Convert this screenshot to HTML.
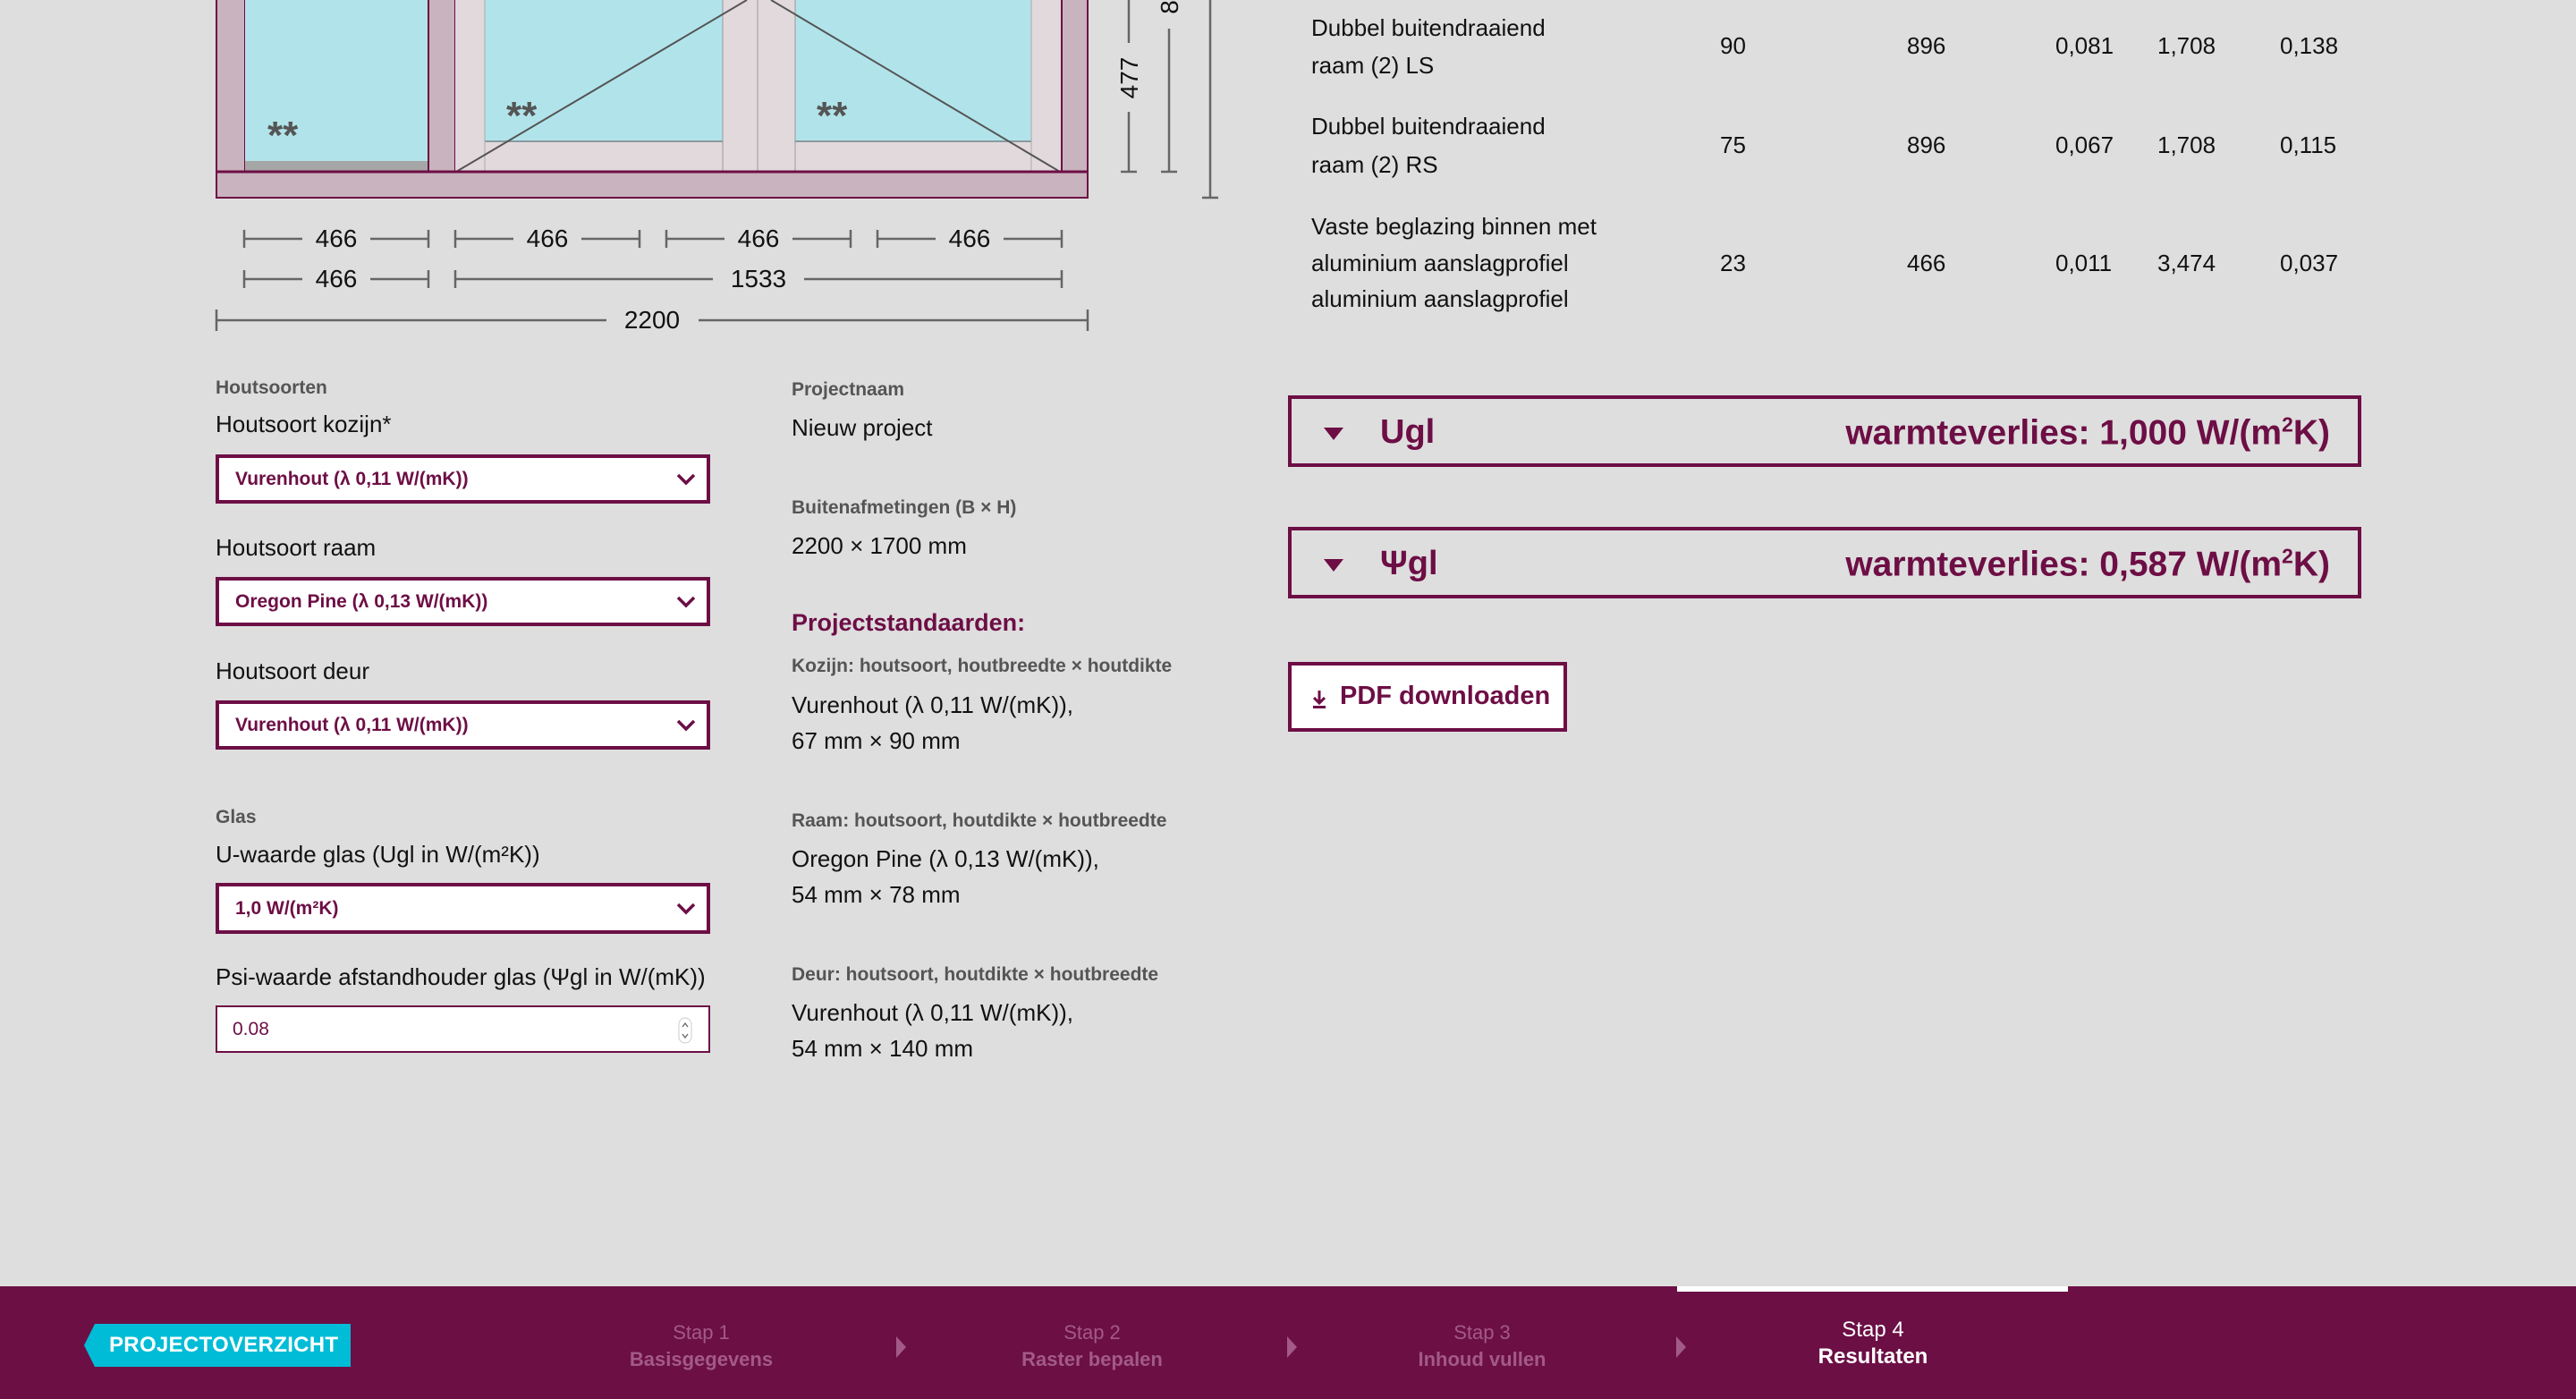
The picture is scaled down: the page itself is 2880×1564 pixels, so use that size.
<!DOCTYPE html>
<html><head><meta charset="utf-8"><style>
*{margin:0;padding:0;box-sizing:border-box}
body{width:2880px;height:1564px;background:#dedede;font-family:"Liberation Sans",Arial,sans-serif;color:#111;position:relative;overflow:hidden}
.a{position:absolute;white-space:nowrap}
.t{font-size:26px;line-height:30px;transform:translateY(-15px)}
.lbl{font-size:21px;font-weight:bold;color:#555;transform:translateY(-12px)}
.sel{position:absolute;left:241px;width:553px;background:#fff;border:4px solid #6d0e45}
.sel span{position:absolute;left:18px;top:50%;transform:translateY(-50%);font-size:21px;font-weight:bold;color:#6d0e45}
.sel svg{position:absolute;right:12px;top:50%;transform:translateY(-50%)}
.acc{position:absolute;left:1440px;width:1200px;height:80px;border:4px solid #6d0e45}
.acc .tri{position:absolute;left:36px;top:32px;width:0;height:0;border-left:11px solid transparent;border-right:11px solid transparent;border-top:14px solid #6d0e45}
.acc .h{position:absolute;left:99px;top:50%;transform:translateY(-46%);font-size:38px;font-weight:bold;color:#6d0e45}
.acc .r{position:absolute;right:31px;top:50%;transform:translateY(-46%);font-size:39px;font-weight:bold;color:#6d0e45}
.num{font-size:26px;transform:translateY(-15px)}
.step{position:absolute;text-align:center;width:300px;font-size:22px;line-height:30px;color:#a25a86}
.step b{display:block}
</style></head><body>

<svg class="a" style="left:0;top:0" width="1400" height="380" viewBox="0 0 1400 380">
 <rect x="242" y="-2" width="32" height="194" fill="#c9b3be" stroke="#6d0e45" stroke-width="2"/>
 <rect x="274" y="-2" width="205" height="182" fill="#b1e4ea"/>
 <rect x="274" y="180" width="205" height="12" fill="#a6a6a6"/>
 <rect x="479" y="-2" width="30" height="194" fill="#c9b3be" stroke="#6d0e45" stroke-width="2"/>
 <rect x="509" y="-2" width="678" height="194" fill="#e2d9dd"/>
 <rect x="542" y="-2" width="266" height="160" fill="#b1e4ea"/>
 <rect x="889" y="-2" width="264" height="160" fill="#b1e4ea"/>
 <line x1="542" y1="158" x2="808" y2="158" stroke="#8a9a9e" stroke-width="2"/>
 <line x1="889" y1="158" x2="1153" y2="158" stroke="#8a9a9e" stroke-width="2"/>
 <line x1="542" y1="0" x2="542" y2="192" stroke="#aaa" stroke-width="1"/>
 <line x1="808" y1="0" x2="808" y2="192" stroke="#999" stroke-width="1"/>
 <line x1="847" y1="0" x2="847" y2="192" stroke="#999" stroke-width="1"/>
 <line x1="889" y1="0" x2="889" y2="192" stroke="#999" stroke-width="1"/>
 <line x1="1153" y1="0" x2="1153" y2="192" stroke="#aaa" stroke-width="1"/>
 <rect x="1187" y="-2" width="29" height="194" fill="#c9b3be" stroke="#6d0e45" stroke-width="2"/>
 <line x1="510" y1="192" x2="835" y2="0" stroke="#555" stroke-width="2"/>
 <line x1="862" y1="0" x2="1185" y2="192" stroke="#555" stroke-width="2"/>
 <rect x="242" y="192" width="974" height="29" fill="#c9b3be" stroke="#6d0e45" stroke-width="2"/>
 <line x1="242" y1="192" x2="1216" y2="192" stroke="#6d0e45" stroke-width="3"/>
 <g font-family="Liberation Sans, sans-serif" font-size="44" font-weight="bold" fill="#555">
  <text x="299" y="166">**</text><text x="566" y="144">**</text><text x="913" y="144">**</text>
 </g>
 <g stroke="#666" stroke-width="2.5">
  <line x1="1262" y1="0" x2="1262" y2="48"/><line x1="1262" y1="125" x2="1262" y2="192"/><line x1="1253" y1="192" x2="1271" y2="192"/>
  <line x1="1307" y1="32" x2="1307" y2="192"/><line x1="1298" y1="192" x2="1316" y2="192"/>
  <line x1="1353" y1="0" x2="1353" y2="221"/><line x1="1344" y1="221" x2="1362" y2="221"/>
 </g>
 <g font-family="Liberation Sans, sans-serif" font-size="28" fill="#111">
  <text transform="translate(1272,87) rotate(-90)" text-anchor="middle">477</text>
  <text transform="translate(1317,8) rotate(-90)" text-anchor="middle">8</text>
 </g>
 <g stroke="#666" stroke-width="2.5" fill="none">
  <path d="M273 257v20M273 267h65M414 267h65M479 257v20"/>
  <path d="M509 257v20M509 267h65M650 267h65M715 257v20"/>
  <path d="M745 257v20M745 267h65M886 267h65M951 257v20"/>
  <path d="M981 257v20M981 267h65M1122 267h65M1187 257v20"/>
  <path d="M273 302v20M273 312h65M414 312h65M479 302v20"/>
  <path d="M509 302v20M509 312h288M899 312h288M1187 302v20"/>
  <path d="M242 346v24M242 358h436M781 358h435M1216 346v24"/>
 </g>
 <g font-family="Liberation Sans, sans-serif" font-size="28" fill="#111" text-anchor="middle">
  <text x="376" y="276">466</text><text x="612" y="276">466</text><text x="848" y="276">466</text><text x="1084" y="276">466</text>
  <text x="376" y="321">466</text><text x="848" y="321">1533</text>
  <text x="729" y="367">2200</text>
 </g>
</svg>

<div class="a t" style="left:1466px;top:31px">Dubbel buitendraaiend</div>
<div class="a t" style="left:1466px;top:73px">raam (2) LS</div>
<div class="a num" style="left:1923px;top:51px">90</div><div class="a num" style="left:2132px;top:51px">896</div><div class="a num" style="left:2298px;top:51px">0,081</div><div class="a num" style="left:2412px;top:51px">1,708</div><div class="a num" style="left:2549px;top:51px">0,138</div>
<div class="a t" style="left:1466px;top:141px">Dubbel buitendraaiend</div>
<div class="a t" style="left:1466px;top:184px">raam (2) RS</div>
<div class="a num" style="left:1923px;top:162px">75</div><div class="a num" style="left:2132px;top:162px">896</div><div class="a num" style="left:2298px;top:162px">0,067</div><div class="a num" style="left:2412px;top:162px">1,708</div><div class="a num" style="left:2549px;top:162px">0,115</div>
<div class="a t" style="left:1466px;top:253px">Vaste beglazing binnen met</div>
<div class="a t" style="left:1466px;top:294px">aluminium aanslagprofiel</div>
<div class="a t" style="left:1466px;top:334px">aluminium aanslagprofiel</div>
<div class="a num" style="left:1923px;top:294px">23</div><div class="a num" style="left:2132px;top:294px">466</div><div class="a num" style="left:2298px;top:294px">0,011</div><div class="a num" style="left:2412px;top:294px">3,474</div><div class="a num" style="left:2549px;top:294px">0,037</div>

<div class="a lbl" style="left:241px;top:434px">Houtsoorten</div>
<div class="a t" style="left:241px;top:474px">Houtsoort kozijn*</div>
<div class="sel" style="top:508px;height:55px"><span>Vurenhout (λ 0,11 W/(mK))</span><svg width="22" height="14" viewBox="0 0 22 14"><path d="M2 2l9 9 9-9" stroke="#6d0e45" stroke-width="3.5" fill="none"/></svg></div>
<div class="a t" style="left:241px;top:612px">Houtsoort raam</div>
<div class="sel" style="top:645px;height:55px"><span>Oregon Pine (λ 0,13 W/(mK))</span><svg width="22" height="14" viewBox="0 0 22 14"><path d="M2 2l9 9 9-9" stroke="#6d0e45" stroke-width="3.5" fill="none"/></svg></div>
<div class="a t" style="left:241px;top:750px">Houtsoort deur</div>
<div class="sel" style="top:783px;height:55px"><span>Vurenhout (λ 0,11 W/(mK))</span><svg width="22" height="14" viewBox="0 0 22 14"><path d="M2 2l9 9 9-9" stroke="#6d0e45" stroke-width="3.5" fill="none"/></svg></div>
<div class="a lbl" style="left:241px;top:914px">Glas</div>
<div class="a t" style="left:241px;top:955px">U-waarde glas (Ugl in W/(m²K))</div>
<div class="sel" style="top:987px;height:57px"><span>1,0 W/(m²K)</span><svg width="22" height="14" viewBox="0 0 22 14"><path d="M2 2l9 9 9-9" stroke="#6d0e45" stroke-width="3.5" fill="none"/></svg></div>
<div class="a t" style="left:241px;top:1092px">Psi-waarde afstandhouder glas (Ψgl in W/(mK))</div>
<div class="a" style="left:241px;top:1124px;width:553px;height:53px;background:#fff;border:2px solid #6d0e45">
 <span style="position:absolute;left:17px;top:13px;font-size:21px;color:#6d0e45">0.08</span>
 <svg style="position:absolute;right:18px;top:11px" width="16" height="30" viewBox="0 0 16 30"><rect x="1" y="1" width="14" height="28" rx="7" fill="#fff" stroke="#ccc"/><path d="M5 11l3-4 3 4M5 19l3 4 3-4" stroke="#666" stroke-width="1.3" fill="none"/></svg>
</div>

<div class="a lbl" style="left:885px;top:436px">Projectnaam</div>
<div class="a t" style="left:885px;top:478px">Nieuw project</div>
<div class="a lbl" style="left:885px;top:568px">Buitenafmetingen (B × H)</div>
<div class="a t" style="left:885px;top:610px">2200 × 1700 mm</div>
<div class="a" style="left:885px;top:681px;font-size:27px;font-weight:bold;color:#6d0e45">Projectstandaarden:</div>
<div class="a lbl" style="left:885px;top:745px">Kozijn: houtsoort, houtbreedte × houtdikte</div>
<div class="a t" style="left:885px;top:788px">Vurenhout (λ 0,11 W/(mK)),</div>
<div class="a t" style="left:885px;top:828px">67 mm × 90 mm</div>
<div class="a lbl" style="left:885px;top:918px">Raam: houtsoort, houtdikte × houtbreedte</div>
<div class="a t" style="left:885px;top:960px">Oregon Pine (λ 0,13 W/(mK)),</div>
<div class="a t" style="left:885px;top:1000px">54 mm × 78 mm</div>
<div class="a lbl" style="left:885px;top:1090px">Deur: houtsoort, houtdikte × houtbreedte</div>
<div class="a t" style="left:885px;top:1132px">Vurenhout (λ 0,11 W/(mK)),</div>
<div class="a t" style="left:885px;top:1172px">54 mm × 140 mm</div>

<div class="acc" style="top:442px"><div class="tri"></div><div class="h">Ugl</div><div class="r">warmteverlies: 1,000 W/(m<sup style="font-size:23px">2</sup>K)</div></div>
<div class="acc" style="top:589px"><div class="tri"></div><div class="h">Ψgl</div><div class="r">warmteverlies: 0,587 W/(m<sup style="font-size:23px">2</sup>K)</div></div>
<div class="a" style="left:1440px;top:740px;width:312px;height:78px;background:#fff;border:4px solid #6d0e45">
 <svg style="position:absolute;left:22px;top:27px" width="18" height="22" viewBox="0 0 18 22"><path d="M9 1v13M3 9l6 6 6-6" stroke="#6d0e45" stroke-width="3" fill="none"/><rect x="2" y="18" width="14" height="3" fill="#6d0e45"/></svg>
 <span style="position:absolute;left:54px;top:18px;font-size:29px;font-weight:bold;color:#6d0e45">PDF downloaden</span>
</div>

<div class="a" style="left:0;top:1438px;width:2880px;height:126px;background:#6c0f45"></div>
<div class="a" style="left:1875px;top:1438px;width:437px;height:6px;background:#fff"></div>
<svg class="a" style="left:94px;top:1480px" width="298" height="48" viewBox="0 0 298 48"><path d="M12 0H298V48H12L0 24Z" fill="#00bcd6"/></svg>
<div class="a" style="left:122px;top:1487px;font-size:24px;line-height:34px;color:#fff;font-weight:bold;letter-spacing:0.3px">PROJECTOVERZICHT</div>
<div class="step" style="left:634px;top:1475px">Stap 1<b>Basisgegevens</b></div>
<div class="step" style="left:1071px;top:1475px">Stap 2<b>Raster bepalen</b></div>
<div class="step" style="left:1507px;top:1475px">Stap 3<b>Inhoud vullen</b></div>
<div class="step" style="left:1944px;top:1472px;color:#fff;font-size:24px">Stap 4<b>Resultaten</b></div>
<svg class="a" style="left:1002px;top:1494px" width="12" height="24"><path d="M0 0L11 12 0 24Z" fill="#a25a86"/></svg>
<svg class="a" style="left:1439px;top:1494px" width="12" height="24"><path d="M0 0L11 12 0 24Z" fill="#a25a86"/></svg>
<svg class="a" style="left:1874px;top:1494px" width="12" height="24"><path d="M0 0L11 12 0 24Z" fill="#a25a86"/></svg>
</body></html>
